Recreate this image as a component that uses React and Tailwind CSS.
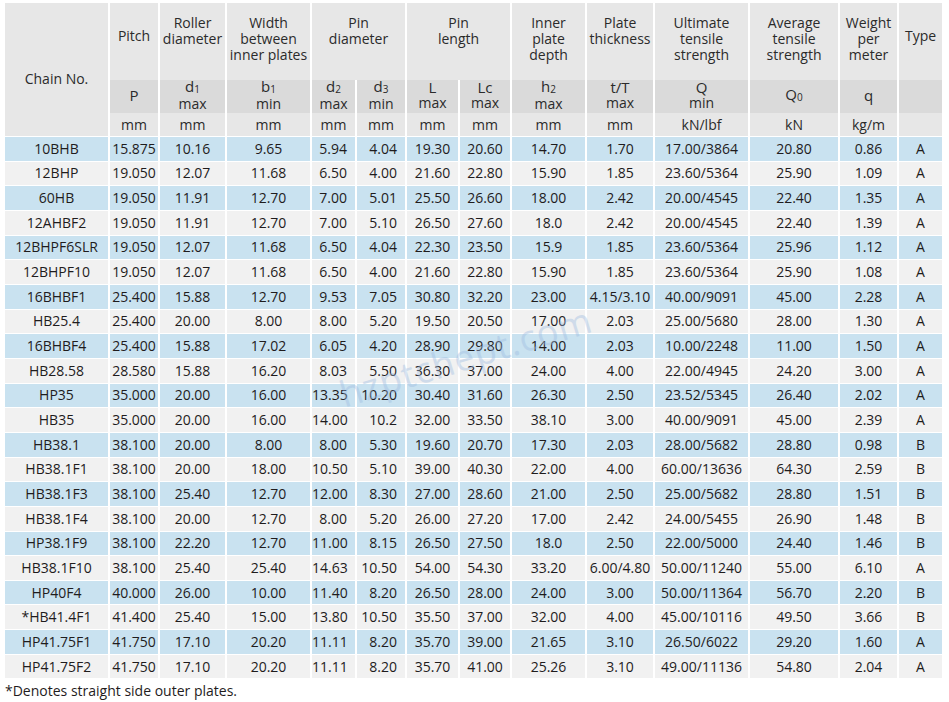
import React from 'react'

// chain dimension table
const rows = [
  ['10BHB','15.875','10.16','9.65','5.94','4.04','19.30','20.60','14.70','1.70','17.00/3864','20.80','0.86','A'],
  ['12BHP','19.050','12.07','11.68','6.50','4.00','21.60','22.80','15.90','1.85','23.60/5364','25.90','1.09','A'],
  ['60HB','19.050','11.91','12.70','7.00','5.01','25.50','26.60','18.00','2.42','20.00/4545','22.40','1.35','A'],
  ['12AHBF2','19.050','11.91','12.70','7.00','5.10','26.50','27.60','18.0','2.42','20.00/4545','22.40','1.39','A'],
  ['12BHPF6SLR','19.050','12.07','11.68','6.50','4.04','22.30','23.50','15.9','1.85','23.60/5364','25.96','1.12','A'],
  ['12BHPF10','19.050','12.07','11.68','6.50','4.00','21.60','22.80','15.90','1.85','23.60/5364','25.90','1.08','A'],
  ['16BHBF1','25.400','15.88','12.70','9.53','7.05','30.80','32.20','23.00','4.15/3.10','40.00/9091','45.00','2.28','A'],
  ['HB25.4','25.400','20.00','8.00','8.00','5.20','19.50','20.50','17.00','2.03','25.00/5680','28.00','1.30','A'],
  ['16BHBF4','25.400','15.88','17.02','6.05','4.20','28.90','29.80','14.00','2.03','10.00/2248','11.00','1.50','A'],
  ['HB28.58','28.580','15.88','16.20','8.03','5.50','36.30','37.00','24.00','4.00','22.00/4945','24.20','3.00','A'],
  ['HP35','35.000','20.00','16.00','13.35','10.20','30.40','31.60','26.30','2.50','23.52/5345','26.40','2.02','A'],
  ['HB35','35.000','20.00','16.00','14.00','10.2','32.00','33.50','38.10','3.00','40.00/9091','45.00','2.39','A'],
  ['HB38.1','38.100','20.00','8.00','8.00','5.30','19.60','20.70','17.30','2.03','28.00/5682','28.80','0.98','B'],
  ['HB38.1F1','38.100','20.00','18.00','10.50','5.10','39.00','40.30','22.00','4.00','60.00/13636','64.30','2.59','B'],
  ['HB38.1F3','38.100','25.40','12.70','12.00','8.30','27.00','28.60','21.00','2.50','25.00/5682','28.80','1.51','B'],
  ['HB38.1F4','38.100','20.00','12.70','8.00','5.20','26.00','27.20','17.00','2.42','24.00/5455','26.90','1.48','B'],
  ['HP38.1F9','38.100','22.20','12.70','11.00','8.15','26.50','27.50','18.0','2.50','22.00/5000','24.40','1.46','B'],
  ['HB38.1F10','38.100','25.40','25.40','14.63','10.50','54.00','54.30','33.20','6.00/4.80','50.00/11240','55.00','6.10','A'],
  ['HP40F4','40.000','26.00','10.00','11.40','8.20','26.50','28.00','24.00','3.00','50.00/11364','56.70','2.20','B'],
  ['*HB41.4F1','41.400','25.40','15.00','13.80','10.50','35.50','37.00','32.00','4.00','45.00/10116','49.50','3.66','B'],
  ['HP41.75F1','41.750','17.10','20.20','11.11','8.20','35.70','39.00','21.65','3.10','26.50/6022','29.20','1.60','A'],
  ['HP41.75F2','41.750','17.10','20.20','11.11','8.20','35.70','41.00','25.26','3.10','49.00/11136','54.80','2.04','A'],
]

const widths = ['w-[103px]','w-[50px]','w-[67px]','w-[85px]','w-[45px]','w-[50px]','w-[53px]','w-[52px]','w-[75px]','w-[68px]','w-[95px]','w-[90px]','w-[59px]','w-[45px]']

const Sym = ({ s, sub, lim }) => (
  <div className="leading-[15px] -mt-[3px]">
    <div className="text-[15px]">{s}{sub && <span className="text-[10px] relative top-[1px]">{sub}</span>}</div>
    {lim && <div>{lim}</div>}
  </div>
)

const App = () => {
  const h1 = 'align-top pt-[12px] border-l-2 border-white leading-[16px]'
  const h2 = 'bg-[#dadada] border-l-2 border-white align-middle'
  const h3 = 'border-l-2 border-white align-middle leading-[16px]'

  return (
    <div className="bg-white w-[949px] h-[702px] pt-[3px] pl-[5px] text-[14px] text-[#1f1c1d] relative" style={{ fontFamily: '"Open Sans", "Noto Sans", sans-serif' }}>
      <table className="table-fixed w-[937px] border-separate border-spacing-0 text-center">
        <colgroup>
          {widths.map((w, i) => <col key={i} className={w} />)}
        </colgroup>
        <thead className="bg-[#e7e7e7] text-[#2b2b2b] font-normal">
          <tr className="h-[77px]">
            <th rowSpan={3} className="font-normal align-middle pt-[17px]">Chain No.</th>
            <th className={h1 + ' font-normal pt-[25px]'}>Pitch</th>
            <th className={h1 + ' font-normal'}>Roller<br />diameter</th>
            <th className={h1 + ' font-normal'}>Width<br />between<br />inner plates</th>
            <th colSpan={2} className={h1 + ' font-normal'}>Pin<br />diameter</th>
            <th colSpan={2} className={h1 + ' font-normal'}>Pin<br />length</th>
            <th className={h1 + ' font-normal'}>Inner<br />plate<br />depth</th>
            <th className={h1 + ' font-normal'}>Plate<br />thickness</th>
            <th className={h1 + ' font-normal'}>Ultimate<br />tensile<br />strength</th>
            <th className={h1 + ' font-normal'}>Average<br />tensile<br />strength</th>
            <th className={h1 + ' font-normal'}>Weight<br />per<br />meter</th>
            <th className={h1 + ' font-normal pt-[25px]'}>Type</th>
          </tr>
          <tr className="h-[33px]">
            <th className={h2 + ' font-normal'}><Sym s="P" /></th>
            <th className={h2 + ' font-normal'}><Sym s="d" sub="1" lim="max" /></th>
            <th className={h2 + ' font-normal'}><Sym s="b" sub="1" lim="min" /></th>
            <th className={h2 + ' font-normal'}><Sym s="d" sub="2" lim="max" /></th>
            <th className={h2 + ' font-normal'}><Sym s="d" sub="3" lim="min" /></th>
            <th className={h2 + ' font-normal'}><Sym s="L" lim="max" /></th>
            <th className={h2 + ' font-normal'}><Sym s="Lc" lim="max" /></th>
            <th className={h2 + ' font-normal'}><Sym s="h" sub="2" lim="max" /></th>
            <th className={h2 + ' font-normal'}><Sym s="t/T" lim="max" /></th>
            <th className={h2 + ' font-normal'}><Sym s="Q" lim="min" /></th>
            <th className={h2 + ' font-normal'}><Sym s="Q" sub="0" /></th>
            <th className={h2 + ' font-normal'}><Sym s="q" /></th>
            <th className={h2 + ' font-normal'}></th>
          </tr>
          <tr className="h-[23px]">
            {['mm','mm','mm','mm','mm','mm','mm','mm','mm','kN/lbf','kN','kg/m',''].map((u, i) => (
              <th key={i} className={h3 + ' font-normal'}>{u}</th>
            ))}
          </tr>
        </thead>
        <tbody>
          {rows.map((r, i) => (
            <tr key={i} className={(i % 2 === 0 ? 'bg-[#c9e2f0]' : 'bg-[#f1f1f1]') + ' h-[24.67px]'}>
              {r.map((c, j) => (
                <td
                  key={j}
                  className={
                    'border-t border-white leading-[16px] p-0 ' +
                    (j > 0 ? 'border-l-2 ' : '') +
                    (j === 4 || j === 5 ? 'text-right pr-[8px]' : '')
                  }
                >
                  {c}
                </td>
              ))}
            </tr>
          ))}
        </tbody>
      </table>
      <p className="mt-[3px] leading-[20px]">*Denotes straight side outer plates.</p>

      {/* watermark */}
      <div className="absolute left-[335px] top-[330px] -rotate-[17deg] text-[36px] text-[#9dbbe0] opacity-40 pointer-events-none select-none tracking-wide">
        hzptchept.com
      </div>
    </div>
  )
}

export default App
